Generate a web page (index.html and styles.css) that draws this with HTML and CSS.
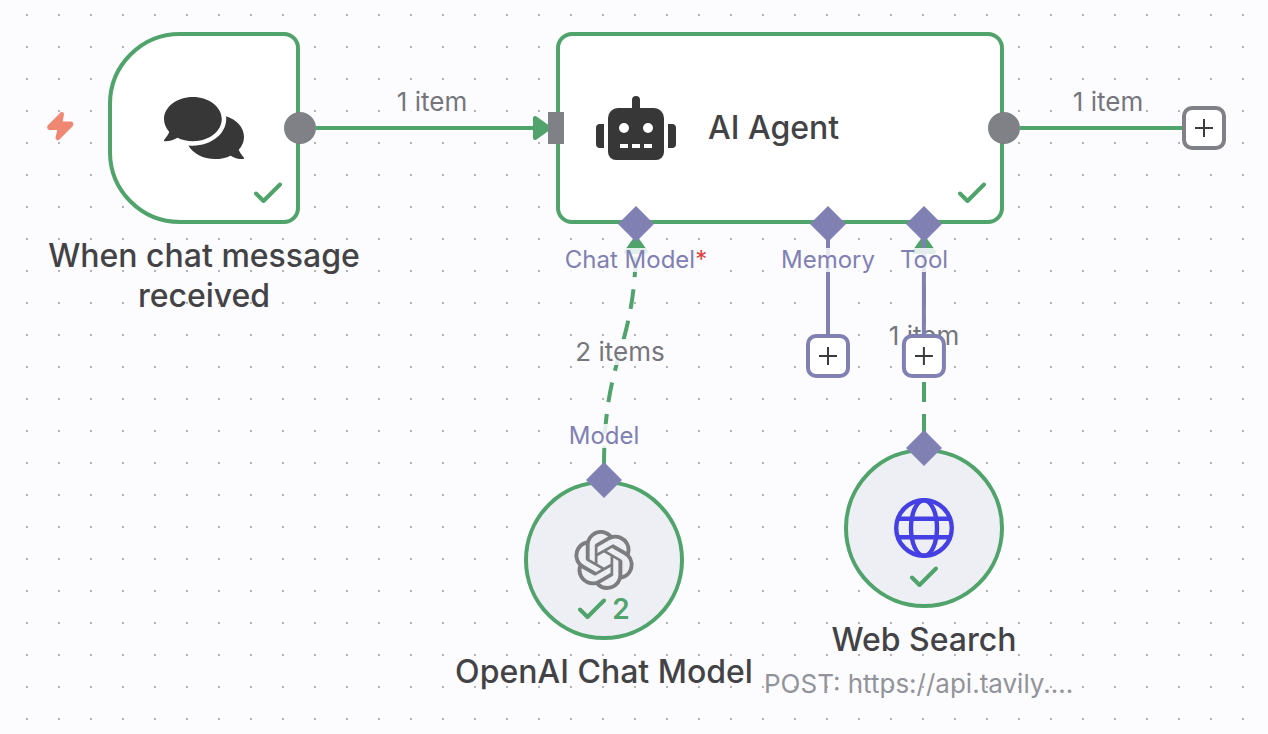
FILE: index.html
```html
<!DOCTYPE html>
<html lang="en">
<head>
<meta charset="utf-8">
<title>Workflow canvas</title>
<link rel="stylesheet" href="styles.css">
</head>
<body>
<main class="canvas">
  <svg class="edges" aria-hidden="true">
    <path class="edge" d="M316 128H536"/>
    <path class="arrow" d="M535 118V138L549 128Z"/>
    <path class="edge" d="M1020 128H1182"/>
    <path class="edge edge-dashed" d="M604 466C604 352 636 352 636 240"/>
    <path class="arrow" d="M626 252H646L636 238Z"/>
    <path class="edge edge-dashed" d="M924 434V240"/>
    <path class="arrow" d="M914 252H934L924 238Z"/>
  </svg>

  <span class="edge-label edge-label-trigger">1 item</span>
  <span class="edge-label edge-label-output">1 item</span>
  <span class="edge-label edge-label-model">2 items</span>
  <span class="edge-label edge-label-tool">1 item</span>

  <svg class="bolt" viewBox="0 0 28 32" aria-hidden="true"><path d="M15.500 3 2.500 16Q1.500 18.500 3.500 19H12.500L10.500 28Q11 29.500 12.500 29L26 15.500Q27 13 25 12.500H15.500L17 4Q16.500 2.500 15.500 3Z"/></svg>

  <article class="node node-trigger">
    <div class="node-box">
      <svg class="icon-chat" viewBox="0 0 576 512" aria-hidden="true"><path d="M416 192c0-88.400-93.100-160-208-160S0 103.600 0 192c0 34.300 14.100 65.900 38 92-13.400 30.200-35.500 54.200-35.800 54.500-2.200 2.300-2.800 5.700-1.500 8.700S4.800 352 8 352c36.600 0 66.900-12.300 88.700-25 32.200 15.700 70.300 25 111.300 25 114.900 0 208-71.600 208-160zm122 220c23.900-26 38-57.700 38-92 0-66.900-53.500-124.200-129.300-148.100.9 6.600 1.300 13.300 1.300 20.100 0 105.900-107.700 192-240 192-10.800 0-21.300-.8-31.700-1.900C207.800 439.600 281.800 480 368 480c41 0 79.100-9.200 111.300-25 21.800 12.700 52.100 25 88.700 25 3.200 0 6.100-1.900 7.300-4.800 1.300-2.900.7-6.300-1.500-8.700-.3-.3-22.400-24.200-35.800-54.500z"/></svg>
      <span class="status"><svg class="check" viewBox="0 0 28 22" aria-label="Success"><path d="M2 11.500 9.500 19 26 2.500"/></svg></span>
    </div>
    <h2 class="node-title">When chat message received</h2>
    <span class="handle-out"></span>
  </article>

  <article class="node node-agent">
    <div class="node-box">
      <svg class="icon-robot" viewBox="0 0 640 512" aria-hidden="true"><path d="M32,224H64V416H32A31.960,31.960,0,0,1,0,384V256A31.960,31.960,0,0,1,32,224Zm512-48V448a64.060,64.060,0,0,1-64,64H160a64.060,64.060,0,0,1-64-64V176a79.970,79.970,0,0,1,80-80H288V32a32,32,0,0,1,64,0V96H464A79.970,79.970,0,0,1,544,176ZM264,256a40,40,0,1,0-40,40A40,40,0,0,0,264,256Zm-8,128H192v32h64Zm96,0H288v32h64ZM456,256a40,40,0,1,0-40,40A40,40,0,0,0,456,256Zm-8,128H384v32h64ZM640,256V384a31.960,31.960,0,0,1-32,32H576V224h32A31.960,31.960,0,0,1,640,256Z"/></svg>
      <h2 class="node-title">AI Agent</h2>
      <span class="status"><svg class="check" viewBox="0 0 28 22" aria-label="Success"><path d="M2 11.500 9.500 19 26 2.500"/></svg></span>
    </div>
    <span class="handle-in"></span>
    <span class="handle-out"></span>
  </article>
  <button class="plus plus-main" type="button" aria-label="Add node"><svg viewBox="0 0 18 18"><path d="M9 0V18M0 9H18"/></svg></button>

  <div class="port port-chat">
    <span class="diamond"></span>
    <span class="port-label">Chat Model<span class="required">*</span></span>
  </div>
  <div class="port port-memory">
    <span class="diamond"></span>
    <span class="port-label">Memory</span>
    <button class="plus" type="button" aria-label="Add memory"><svg viewBox="0 0 18 18"><path d="M9 0V18M0 9H18"/></svg></button>
  </div>
  <div class="port port-tool">
    <span class="diamond"></span>
    <span class="port-label">Tool</span>
    <button class="plus" type="button" aria-label="Add tool"><svg viewBox="0 0 18 18"><path d="M9 0V18M0 9H18"/></svg></button>
  </div>

  <article class="node node-round node-openai">
    <div class="node-box">
      <svg class="icon-round icon-openai" viewBox="0 0 24 24" aria-hidden="true"><path d="M22.2819 9.8211a5.9847 5.9847 0 0 0-.5157-4.9108 6.0462 6.0462 0 0 0-6.5098-2.9A6.0651 6.0651 0 0 0 4.9807 4.1818a5.9847 5.9847 0 0 0-3.9977 2.9 6.0462 6.0462 0 0 0 .7427 7.0966 5.98 5.98 0 0 0 .511 4.9107 6.051 6.051 0 0 0 6.5146 2.9001A5.9847 5.9847 0 0 0 13.2599 24a6.0557 6.0557 0 0 0 5.7718-4.2058 5.9894 5.9894 0 0 0 3.9977-2.9001 6.0557 6.0557 0 0 0-.7475-7.0729zm-9.022 12.6081a4.4755 4.4755 0 0 1-2.8764-1.0408l.1419-.0804 4.7783-2.7582a.7948.7948 0 0 0 .3927-.6813v-6.7369l2.02 1.1686a.071.071 0 0 1 .038.052v5.5826a4.504 4.504 0 0 1-4.4945 4.4944zm-9.6607-4.1254a4.4708 4.4708 0 0 1-.5346-3.0137l.142.0852 4.783 2.7582a.7712.7712 0 0 0 .7806 0l5.8428-3.3685v2.3324a.0804.0804 0 0 1-.0332.0615L9.74 19.9502a4.4992 4.4992 0 0 1-6.1408-1.6464zM2.3408 7.8956a4.485 4.485 0 0 1 2.3655-1.9728V11.6a.7664.7664 0 0 0 .3879.6765l5.8144 3.3543-2.0201 1.1685a.0757.0757 0 0 1-.071 0l-4.8303-2.7865A4.504 4.504 0 0 1 2.3408 7.872zm16.5963 3.8558L13.1038 8.364 15.1192 7.2a.0757.0757 0 0 1 .071 0l4.8303 2.7913a4.4944 4.4944 0 0 1-.6765 8.1042v-5.6772a.79.79 0 0 0-.407-.667zm2.0107-3.0231l-.142-.0852-4.7735-2.7818a.7759.7759 0 0 0-.7854 0L9.409 9.2297V6.8974a.0662.0662 0 0 1 .0284-.0615l4.8303-2.7866a4.4992 4.4992 0 0 1 6.6802 4.66zM8.3065 12.863l-2.02-1.1638a.0804.0804 0 0 1-.038-.0567V6.0742a4.4992 4.4992 0 0 1 7.3757-3.4537l-.142.0805L8.704 5.459a.7948.7948 0 0 0-.3927.6813zm1.0976-2.3654l2.602-1.4998 2.6069 1.4998v2.9994l-2.5974 1.4997-2.6067-1.4997Z"/></svg>
      <span class="status"><svg class="check" viewBox="0 0 28 22" aria-label="Success"><path d="M2 11.500 9.500 19 26 2.500"/></svg><span>2</span></span>
    </div>
    <h2 class="node-title">OpenAI Chat Model</h2>
    <span class="port-label">Model</span>
    <span class="diamond"></span>
  </article>

  <article class="node node-round node-search">
    <div class="node-box">
      <svg class="icon-round icon-globe" viewBox="0 0 60 60" aria-hidden="true"><circle cx="30" cy="30" r="27.800"/><ellipse cx="30" cy="30" rx="13" ry="27.800"/><path d="M4 20.800H56M4 39.200H56"/></svg>
      <span class="status"><svg class="check" viewBox="0 0 28 22" aria-label="Success"><path d="M2 11.500 9.500 19 26 2.500"/></svg></span>
    </div>
    <h2 class="node-title">Web Search</h2>
    <p class="node-subtitle">POST: https://api.tavily....</p>
    <span class="diamond"></span>
  </article>
</main>
</body>
</html>
```
FILE: styles.css
```css
:root {
  --green: #50a36b;
  --purple: #8080b3;
  --gray: #808187;
  --canvas: #fcfcff;
  --ink: #434346;
}

* { box-sizing: border-box; }

body {
  margin: 0;
  font-family: Inter, "Liberation Sans", sans-serif;
  color: var(--ink);
}

.canvas {
  position: relative;
  min-height: 100vh;
  overflow: hidden;
  background-color: var(--canvas);
  background-image: conic-gradient(from 90deg at 30px 30px, #b4b4b7 90deg, transparent 0);
  background-size: 32px 32px;
  background-position: -4px 16px;
}

.edges {
  position: absolute;
  inset: 0;
  width: 100%;
  height: 100%;
}

.edge { fill: none; stroke: var(--green); stroke-width: 4; }
.edge-dashed { stroke-dasharray: 20 12; }
.arrow {
  fill: var(--green);
  stroke: var(--green);
  stroke-width: 4;
  stroke-linejoin: round;
}

.edge-label {
  position: absolute;
  transform: translate(-50%, -50%);
  background: rgb(252 252 255 / 85%);
  color: #75767c;
  font-size: 26px;
  line-height: 26px;
  white-space: nowrap;
}
.edge-label-trigger { left: 432px; top: 102px; }
.edge-label-output { left: 1108px; top: 102px; }
.edge-label-model { left: 620px; top: 352px; }
.edge-label-tool { left: 924px; top: 336px; }

.bolt {
  position: absolute;
  left: 46px;
  top: 110px;
  width: 28px;
  height: 32px;
  fill: #f08772;
  stroke: #f08772;
  stroke-width: 2;
  stroke-linejoin: round;
}

.node {
  position: absolute;
  display: flex;
  flex-direction: column;
  align-items: center;
}
.node-box {
  position: relative;
  display: flex;
  align-items: center;
  justify-content: center;
  width: 100%;
  height: 192px;
  border: 4px solid var(--green);
  border-radius: 16px;
  background: #fff;
}
.node-title {
  margin: 12px 0 0;
  font-size: 32px;
  line-height: 40px;
  font-weight: 500;
  text-align: center;
  white-space: nowrap;
}
.node-subtitle {
  margin: 8px 0 0;
  width: 320px;
  color: #929399;
  font-size: 26px;
  line-height: 32px;
  white-space: nowrap;
}

.node-trigger { left: 108px; top: 32px; width: 192px; }
.node-trigger .node-box { border-radius: 72px 16px 16px 72px; }
.node-trigger .node-title { width: 320px; white-space: normal; }

.node-agent { left: 556px; top: 32px; width: 448px; }
.node-agent .node-box { justify-content: flex-start; gap: 32px; padding-left: 36px; }
.node-agent .node-title { margin: 0; }

.node-round { width: 160px; }
.node-round .node-box {
  height: 160px;
  border-radius: 50%;
  background: #eeeff5;
}
.node-openai { left: 524px; top: 480px; }
.node-search { left: 844px; top: 448px; }

.icon-chat { width: 80px; height: 72px; fill: #373737; }
.icon-robot { width: 80px; height: 64px; fill: #373737; }
.icon-round { width: 60px; height: 60px; }
.icon-openai { fill: #7d7d80; }
.icon-globe { fill: none; stroke: #4440e3; stroke-width: 4.4; }

.status {
  position: absolute;
  right: 14px;
  bottom: 16px;
  display: flex;
  align-items: center;
  gap: 6px;
  color: var(--green);
  font-size: 28px;
  line-height: 28px;
  font-weight: 600;
}
.node-round .status { right: 0; left: 0; justify-content: center; }
.node-openai .status { bottom: 13px; }
.check {
  width: 28px;
  height: 22px;
  fill: none;
  stroke: currentColor;
  stroke-width: 4;
  stroke-linecap: round;
  stroke-linejoin: round;
}

.handle-out,
.handle-in {
  position: absolute;
  top: 80px;
  height: 32px;
  background: var(--gray);
}
.handle-out { right: -16px; width: 32px; border-radius: 50%; }
.handle-in { left: -8px; width: 16px; }

.diamond {
  width: 36px;
  height: 36px;
  background: var(--purple);
  clip-path: polygon(50% 0, 100% 50%, 50% 100%, 0 50%);
}
.node .diamond { position: absolute; top: -18px; }

.port-label {
  position: relative;
  background: rgb(252 252 255 / 85%);
  color: var(--purple);
  font-size: 24px;
  line-height: 24px;
  white-space: nowrap;
}
.node .port-label { position: absolute; top: -56px; }
.required { color: #e0403c; }

.port {
  position: absolute;
  top: 206px;
  display: flex;
  flex-direction: column;
  align-items: center;
  gap: 6px;
  transform: translateX(-50%);
}
.port-chat { left: 636px; }
.port-memory { left: 828px; }
.port-tool { left: 924px; }
.port-memory::before,
.port-tool::before {
  content: "";
  position: absolute;
  top: 18px;
  bottom: 40px;
  width: 4px;
  background: var(--purple);
}

.plus {
  display: flex;
  align-items: center;
  justify-content: center;
  width: 44px;
  height: 44px;
  padding: 0;
  border: 4px solid var(--gray);
  border-radius: 10px;
  background: #fff;
  color: #3c3c3f;
}
.plus svg { width: 18px; height: 18px; stroke: currentColor; stroke-width: 2; }
.plus-main { position: absolute; left: 1182px; top: 106px; }
.port .plus { position: relative; margin-top: 56px; border-color: var(--purple); }
```
